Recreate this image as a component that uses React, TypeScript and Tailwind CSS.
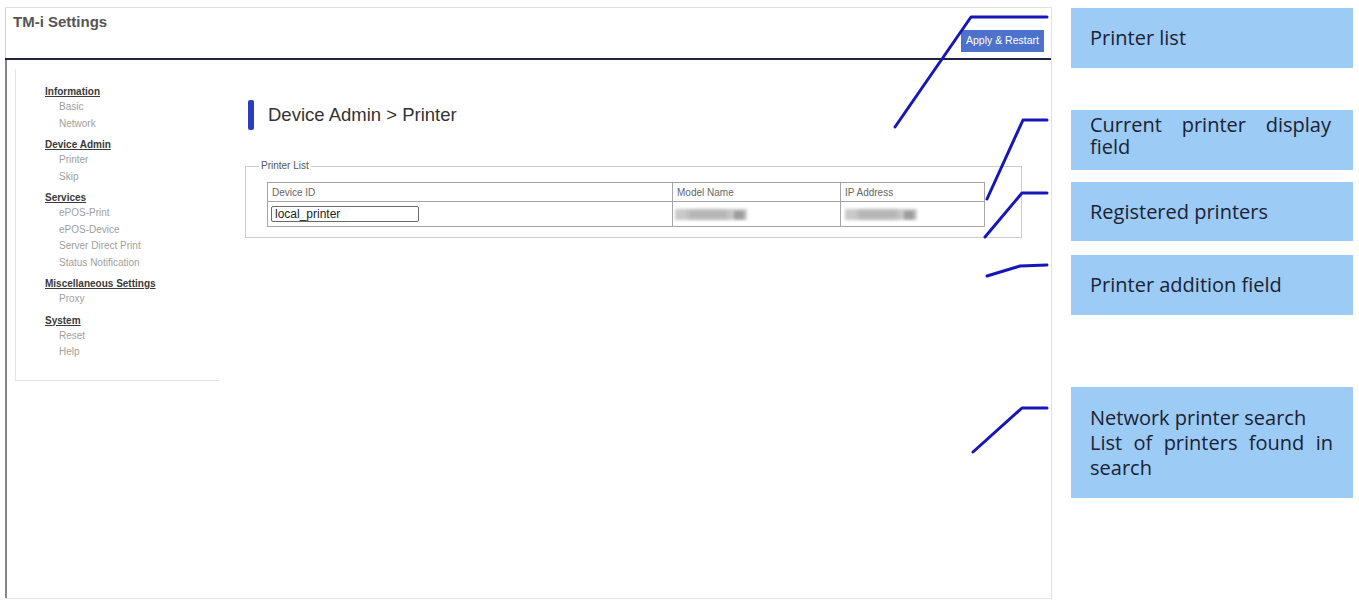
import React from "react";

const ui = { fontFamily: '"Liberation Sans", Arial, sans-serif' };
const callFont = { fontFamily: '"Open Sans", "Noto Sans", sans-serif' };

function Group({ title, items }: { title: string; items: string[] }) {
  return (
    <div className="mt-[6px] first:mt-0">
      <div className="text-[10px] leading-[14px] font-bold text-[#3a3a3a] underline underline-offset-1">{title}</div>
      {items.map((it) => (
        <div key={it} className="pl-[14px] text-[10px] leading-[16.5px] text-[#a0a0a0]">
          {it}
        </div>
      ))}
    </div>
  );
}

function Blurred() {
  return (
    <div className="relative h-[15px] w-[74px]">
      <div className="absolute left-[1px] top-[2px] h-[11px] w-[72px] bg-[#c9c9c9] blur-[1.5px]" />
      <div className="absolute left-[14px] top-[4px] h-[7px] w-[40px] bg-[#b2b2b2] blur-[2px]" />
      <div className="absolute left-[60px] top-[4px] h-[8px] w-[10px] bg-[#9c9c9c] blur-[1.5px]" />
    </div>
  );
}

export default function App() {
  return (
    <div className="relative flex h-[601px] w-[1359px] overflow-hidden bg-white" style={ui}>
      {/* Screenshot frame */}
      <div className="ml-[5px] mt-[7px] flex h-[592px] w-[1047px] flex-col border-t border-r border-b border-[#e2e2e2]">
        <div className="flex h-[50px] items-start justify-between border-l border-[#cfcfcf]">
          <div className="pl-[7px] pt-[5px] text-[15px] font-bold leading-[17px] text-[#555]">TM-i Settings</div>
          <div className="mr-[7px] mt-[22px] flex h-[22px] w-[83px] items-center justify-center bg-[#4d72c9] text-[10.5px] text-white">
            Apply &amp; Restart
          </div>
        </div>
        <div className="h-[2px] bg-[#1f2444]" />
        <div className="flex flex-1 border-l-2 border-[#858585]">
          {/* Sidebar */}
          <div className="ml-[8px] mt-[9px] h-[312px] w-[205px] border-l border-b border-[#e4e4e4] pl-[29px] pt-[16px]">
            <Group title="Information" items={["Basic", "Network"]} />
            <Group title="Device Admin" items={["Printer", "Skip"]} />
            <Group title="Services" items={["ePOS-Print", "ePOS-Device", "Server Direct Print", "Status Notification"]} />
            <Group title="Miscellaneous Settings" items={["Proxy"]} />
            <Group title="System" items={["Reset", "Help"]} />
          </div>
          {/* Main */}
          <div className="pl-[25px]">
            <div className="ml-[3px] mt-[40px] flex h-[30px] items-center">
              <div className="h-[30px] w-[6px] rounded-[2px] bg-[#2b3dbf]" />
              <div className="ml-[14px] text-[18.5px] text-[#333]">Device Admin &gt; Printer</div>
            </div>
            <fieldset className="mt-[30px] w-[777px] border border-[#cdcdcd] pl-[21px] pt-[10px] pb-[10px]">
              <legend className="-ml-[8px] px-[2px] text-[10px] leading-[12px] text-[#555]">Printer List</legend>
              <table className="w-[718px] border-collapse border border-[#9c9c9c] text-[10px] text-[#666]">
                <tbody>
                  <tr className="h-[19px]">
                    <td className="w-[405px] border border-[#a5a5a5] pl-[4px]">Device ID</td>
                    <td className="w-[168px] border border-[#a5a5a5] pl-[4px]">Model Name</td>
                    <td className="border border-[#a5a5a5] pl-[4px]">IP Address</td>
                  </tr>
                  <tr className="h-[25px]">
                    <td className="border border-[#a5a5a5] pl-[3px]">
                      <div className="flex h-[16px] w-[148px] items-center rounded-[2px] border border-[#6a6a6a] pl-[3px] text-[12px] text-[#222]">
                        local_printer
                      </div>
                    </td>
                    <td className="border border-[#a5a5a5] pl-[1px]">
                      <Blurred />
                    </td>
                    <td className="border border-[#a5a5a5] pl-[3px]">
                      <Blurred />
                    </td>
                  </tr>
                </tbody>
              </table>
            </fieldset>
          </div>
        </div>
      </div>

      {/* Callouts */}
      <div className="ml-[19px] mt-[8px] flex w-[282px] flex-col text-[20px] text-[#1b2233]" style={callFont}>
        <div className="flex h-[60px] items-center bg-[#9ccbf6] pl-[19px] pr-[22px]">Printer list</div>
        <div className="mt-[42px] h-[60px] bg-[#9ccbf6] pl-[19px] pr-[22px] pt-[4px] text-justify leading-[22px]">
          Current printer display field
        </div>
        <div className="mt-[12px] flex h-[59px] items-center bg-[#9ccbf6] pl-[19px] pr-[22px]">Registered printers</div>
        <div className="mt-[14px] flex h-[60px] items-center bg-[#9ccbf6] pl-[19px] pr-[22px]">Printer addition field</div>
        <div className="mt-[72px] flex h-[111px] items-center bg-[#9ccbf6] pl-[19px] pr-[20px]">
          <div className="text-justify leading-[25px]">
            Network printer search
            <br />
            List of printers found in search
          </div>
        </div>
      </div>

      {/* Leader lines */}
      <svg className="pointer-events-none absolute left-0 top-0" width="1359" height="601" viewBox="0 0 1359 601">
        <g fill="none" stroke="#1717b8" strokeWidth="3" strokeLinecap="round" strokeLinejoin="round">
          <polyline points="895,127 971,17 1047,17" />
          <polyline points="987,199 1023,120 1047,120" />
          <polyline points="985,237 1022,193 1047,193" />
          <polyline points="987,276 1020,266 1047,265" />
          <polyline points="973,452 1022,408 1047,408" />
        </g>
      </svg>
    </div>
  );
}
